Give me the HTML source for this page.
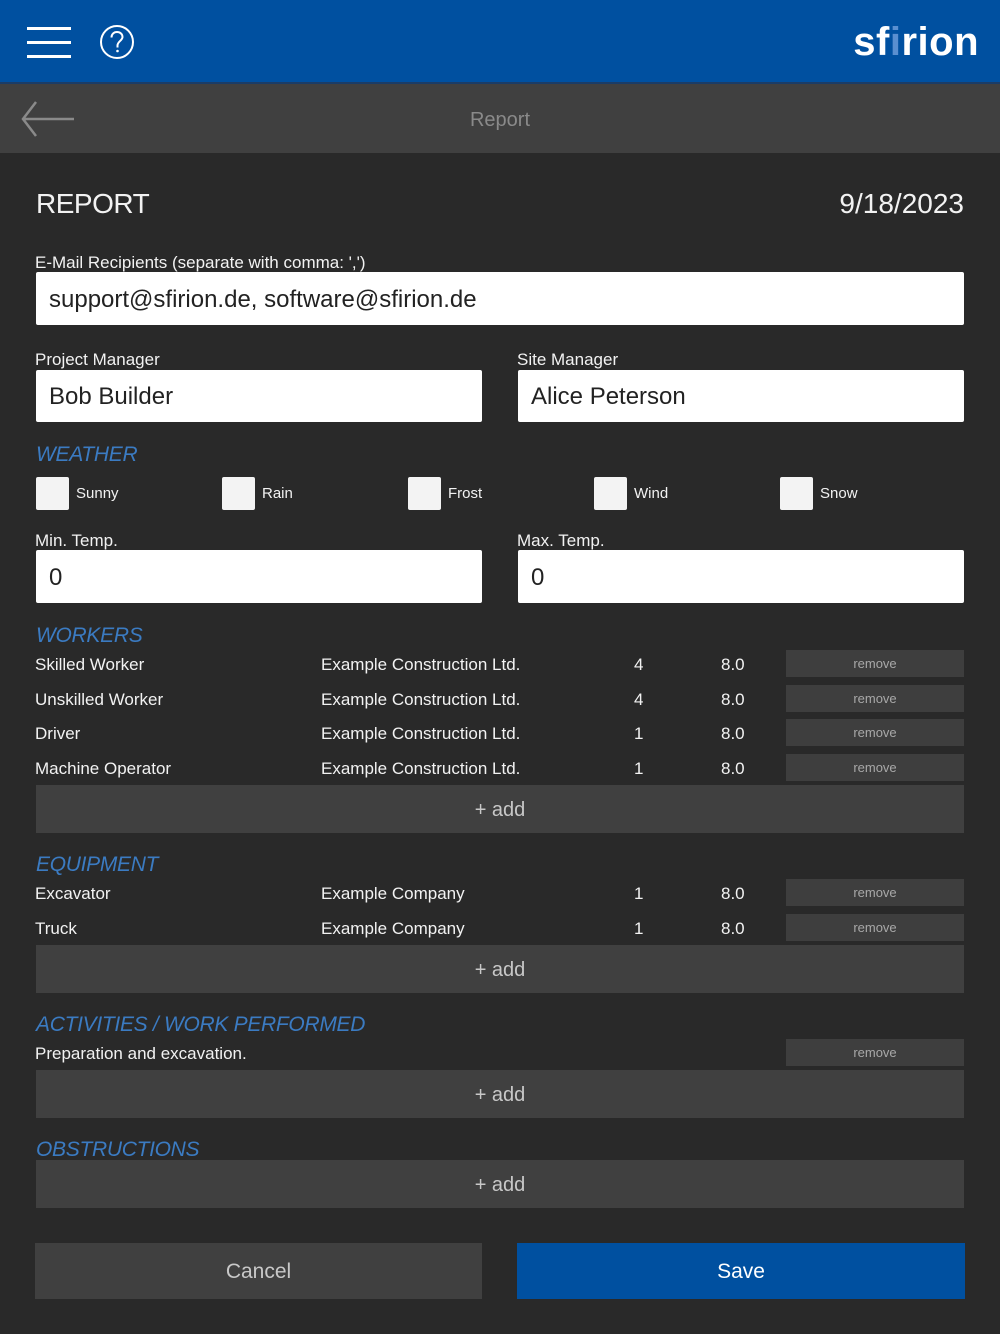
<!DOCTYPE html>
<html><head><meta charset="utf-8"><style>
*{margin:0;padding:0;box-sizing:border-box}
body{width:1000px;height:1334px;background:#292929;position:relative;overflow:hidden;font-family:"Liberation Sans",Arial,sans-serif;color:#f2f2f2}
.a{position:absolute;white-space:nowrap}
.t{position:absolute;white-space:nowrap;height:30px;line-height:32px}
.in{position:absolute;background:#fff;border-radius:2px;color:#222;font-size:24px;padding-left:13px}
.h{position:absolute;left:36px;font-style:italic;color:#3b7bc2;font-size:21px;height:30px;line-height:32px;letter-spacing:-0.3px}
.cb{position:absolute;width:33px;height:33px;background:#f3f3f3;border-radius:2px;top:477px}
.cl{position:absolute;font-size:15px;top:482px;line-height:24px}
.rm{position:absolute;left:786px;width:178px;height:27px;background:#3e3e3e;color:#a8a8a8;font-size:13px;text-align:center;line-height:28px}
.add{position:absolute;left:36px;width:928px;height:48px;background:#404040;color:#c8c8c8;font-size:20px;text-align:center;line-height:50px}
.r{font-size:17px}
</style></head><body>
<div class="a" style="left:0;top:0;width:1000px;height:82px;background:#0050a0"></div>
<div class="a" style="left:0;top:82px;width:1000px;height:2px;background:#1b3c66"></div>
<div class="a" style="left:0;top:84px;width:1000px;height:69px;background:#404040"></div>
<div class="a" style="left:27px;top:27px;width:44px;height:3px;background:#fff"></div>
<div class="a" style="left:27px;top:41px;width:44px;height:3px;background:#fff"></div>
<div class="a" style="left:27px;top:55px;width:44px;height:3px;background:#fff"></div>
<svg class="a" style="left:99px;top:24px" width="36" height="36" viewBox="0 0 36 36"><circle cx="18" cy="18" r="16" fill="none" stroke="#fff" stroke-width="2"/><path d="M12.5 13.5c0-3.5 2.5-5.5 5.5-5.5s5.5 2 5.5 5c0 3.5-5 4.5-5 8.5v2" fill="none" stroke="#fff" stroke-width="2"/><circle cx="18.5" cy="27" r="1.3" fill="#fff"/></svg>
<div class="a" style="right:21px;top:18px;font-size:40px;line-height:48px;color:#fff;letter-spacing:0.5px;font-weight:bold">sf<span style="color:#5a8fd0">i</span>rion</div>
<svg class="a" style="left:20px;top:100px" width="56" height="38" viewBox="0 0 56 38"><path d="M54 19H4M16 2L3 19l13 17" fill="none" stroke="#8a8a8a" stroke-width="2.5"/></svg>
<div class="t" style="left:0;width:1000px;text-align:center;top:104px;color:#8a8a8a;font-size:20px">Report</div>

<div class="t" style="left:36px;top:188px;font-size:28px;letter-spacing:-0.5px">REPORT</div>
<div class="t" style="right:36px;top:188px;font-size:28px">9/18/2023</div>

<div class="t r" style="left:35px;top:247px">E-Mail Recipients (separate with comma: ',')</div>
<div class="in" style="left:36px;top:272px;width:928px;height:53px;line-height:55px">support@sfirion.de, software@sfirion.de</div>
<div class="t r" style="left:35px;top:344px">Project Manager</div>
<div class="t r" style="left:517px;top:344px">Site Manager</div>
<div class="in" style="left:36px;top:370px;width:446px;height:52px;line-height:54px">Bob Builder</div>
<div class="in" style="left:518px;top:370px;width:446px;height:52px;line-height:54px">Alice Peterson</div>

<div class="h" style="top:439px">WEATHER</div>
<div class="cb" style="left:36px"></div><div class="cl" style="left:76px">Sunny</div>
<div class="cb" style="left:222px"></div><div class="cl" style="left:262px">Rain</div>
<div class="cb" style="left:408px"></div><div class="cl" style="left:448px">Frost</div>
<div class="cb" style="left:594px"></div><div class="cl" style="left:634px">Wind</div>
<div class="cb" style="left:780px"></div><div class="cl" style="left:820px">Snow</div>

<div class="t r" style="left:35px;top:525px">Min. Temp.</div>
<div class="t r" style="left:517px;top:525px">Max. Temp.</div>
<div class="in" style="left:36px;top:550px;width:446px;height:53px;line-height:55px">0</div>
<div class="in" style="left:518px;top:550px;width:446px;height:53px;line-height:55px">0</div>

<div class="h" style="top:620px">WORKERS</div>
<div class="t r" style="left:35px;top:649px">Skilled Worker</div><div class="t r" style="left:321px;top:649px">Example Construction Ltd.</div><div class="t r" style="left:634px;top:649px">4</div><div class="t r" style="left:721px;top:649px">8.0</div><div class="rm" style="top:650px">remove</div>
<div class="t r" style="left:35px;top:684px">Unskilled Worker</div><div class="t r" style="left:321px;top:684px">Example Construction Ltd.</div><div class="t r" style="left:634px;top:684px">4</div><div class="t r" style="left:721px;top:684px">8.0</div><div class="rm" style="top:685px">remove</div>
<div class="t r" style="left:35px;top:718px">Driver</div><div class="t r" style="left:321px;top:718px">Example Construction Ltd.</div><div class="t r" style="left:634px;top:718px">1</div><div class="t r" style="left:721px;top:718px">8.0</div><div class="rm" style="top:719px">remove</div>
<div class="t r" style="left:35px;top:753px">Machine Operator</div><div class="t r" style="left:321px;top:753px">Example Construction Ltd.</div><div class="t r" style="left:634px;top:753px">1</div><div class="t r" style="left:721px;top:753px">8.0</div><div class="rm" style="top:754px">remove</div>
<div class="add" style="top:785px">+ add</div>

<div class="h" style="top:849px">EQUIPMENT</div>
<div class="t r" style="left:35px;top:878px">Excavator</div><div class="t r" style="left:321px;top:878px">Example Company</div><div class="t r" style="left:634px;top:878px">1</div><div class="t r" style="left:721px;top:878px">8.0</div><div class="rm" style="top:879px">remove</div>
<div class="t r" style="left:35px;top:913px">Truck</div><div class="t r" style="left:321px;top:913px">Example Company</div><div class="t r" style="left:634px;top:913px">1</div><div class="t r" style="left:721px;top:913px">8.0</div><div class="rm" style="top:914px">remove</div>
<div class="add" style="top:945px">+ add</div>

<div class="h" style="top:1009px">ACTIVITIES / WORK PERFORMED</div>
<div class="t r" style="left:35px;top:1038px">Preparation and excavation.</div><div class="rm" style="top:1039px">remove</div>
<div class="add" style="top:1070px">+ add</div>

<div class="h" style="top:1134px">OBSTRUCTIONS</div>
<div class="add" style="top:1160px">+ add</div>

<div class="a" style="left:35px;top:1243px;width:447px;height:56px;background:#404040;color:#c8c8c8;font-size:21px;text-align:center;line-height:58px">Cancel</div>
<div class="a" style="left:517px;top:1243px;width:448px;height:56px;background:#0050a0;color:#fff;font-size:21px;text-align:center;line-height:58px">Save</div>
</body></html>
